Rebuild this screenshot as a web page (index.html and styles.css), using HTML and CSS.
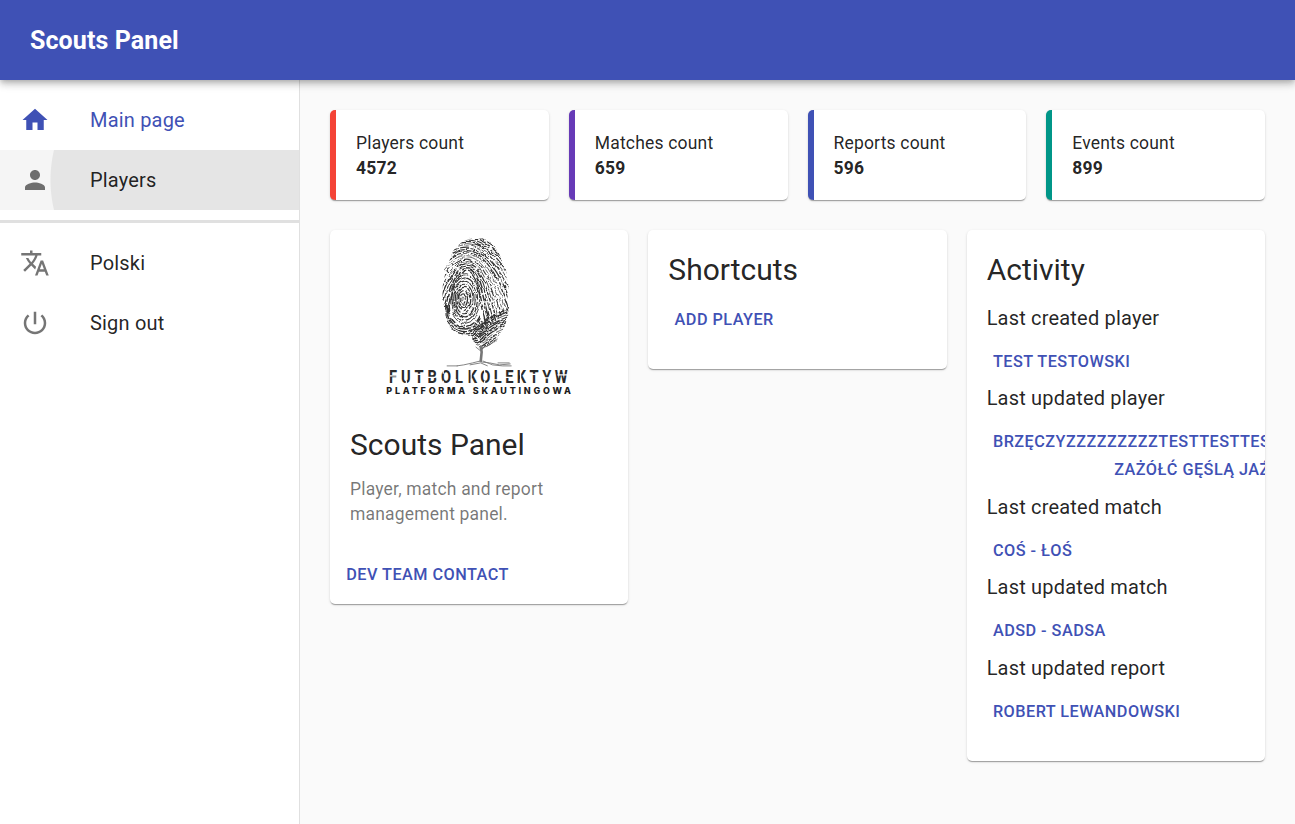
FILE: index.html
```html
<!DOCTYPE html>
<html lang="en">
<head>
<meta charset="utf-8">
<title>Scouts Panel</title>
<link rel="stylesheet" href="styles.css">
</head>
<body>
<header class="app-bar"><h1 class="app-title">Scouts Panel</h1></header>
<div class="shell">
  <nav class="drawer">
    <ul class="nav-list">
      <li class="nav-item active">
        <svg class="icon" viewBox="0 0 24 24"><path d="M10 20v-6h4v6h5v-8h3L12 3 2 12h3v8z"/></svg>
        <span>Main page</span>
      </li>
      <li class="nav-item pressed">
        <svg class="icon" viewBox="0 0 24 24"><path d="M12 12c2.21 0 4-1.79 4-4s-1.79-4-4-4-4 1.79-4 4 1.79 4 4 4zm0 2c-2.67 0-8 1.34-8 4v2h16v-2c0-2.66-5.33-4-8-4z"/></svg>
        <span>Players</span>
      </li>
    </ul>
    <div class="divider"></div>
    <ul class="nav-list">
      <li class="nav-item">
        <svg class="icon" viewBox="0 0 24 24"><path d="M12.87 15.07l-2.54-2.51.03-.03c1.74-1.94 2.98-4.17 3.71-6.53H17V4h-7V2H8v2H1v1.99h11.17C11.5 7.92 10.44 9.75 9 11.35 8.07 10.32 7.3 9.19 6.69 8h-2c.73 1.63 1.73 3.17 2.98 4.56l-5.09 5.02L4 19l5-5 3.11 3.11.76-2.04zM18.5 10h-2L12 22h2l1.12-3h4.75L21 22h2l-4.5-12zm-2.62 7l1.62-4.33L19.12 17h-3.24z"/></svg>
        <span>Polski</span>
      </li>
      <li class="nav-item">
        <svg class="icon" viewBox="0 0 24 24"><path d="M13 3h-2v10h2V3zm4.83 2.17l-1.42 1.42C17.99 7.86 19 9.81 19 12c0 3.87-3.13 7-7 7s-7-3.13-7-7c0-2.19 1.01-4.14 2.58-5.42L6.17 5.17C4.23 6.82 3 9.26 3 12c0 4.97 4.03 9 9 9s9-4.03 9-9c0-2.74-1.23-5.18-3.17-6.83z"/></svg>
        <span>Sign out</span>
      </li>
    </ul>
  </nav>
  <main class="content">
    <section class="stats">
      <div class="card stat red"><p>Players count</p><strong>4572</strong></div>
      <div class="card stat purple"><p>Matches count</p><strong>659</strong></div>
      <div class="card stat indigo"><p>Reports count</p><strong>596</strong></div>
      <div class="card stat teal"><p>Events count</p><strong>899</strong></div>
    </section>
    <section class="columns">
      <article class="card">
        <svg class="media" viewBox="0 0 299 175">
          <defs>
            <clipPath id="print">
              <path d="M144 8C158 7 168 17 172 30C177 42 179 55 179 68C181 82 177 96 170 105C165 113 157 117 151 120L147 115L142 106C132 106 125 104 121 97C114 84 112 70 113 56C114 36 122 10 144 8Z"/>
            </clipPath>
            <filter id="rough" x="-5%" y="-5%" width="110%" height="110%">
              <feTurbulence type="fractalNoise" baseFrequency="0.12" numOctaves="2" seed="4" result="n"/>
              <feDisplacementMap in="SourceGraphic" in2="n" scale="5" xChannelSelector="R" yChannelSelector="G"/>
              <feGaussianBlur stdDeviation="0.4"/>
            </filter>
          </defs>
          <g filter="url(#rough)"><g id="ridges" class="ridges" clip-path="url(#print)"></g></g>
          <g class="twigs">
            <path class="trunk" d="M151 116L152 122L151 132"/>
            <path d="M151 119L160 115L168 109M151 121L146 117M151 131L143 133L134 135L127 136M117 136H128M151 132L160 133L170 135L181 134M153 131L163 135L173 136L182 136M140 135L151 133L158 136M168 133H180"/>
          </g>
          <g transform="scale(.84 1)">
            <text class="logo-name" x="70.500" y="153.500" textLength="88" lengthAdjust="spacing">FUTBOL</text>
            <text class="logo-name" x="164.500" y="153.500" textLength="119" lengthAdjust="spacing">KOLEKTYW</text>
          </g>
          <path class="stencil" d="M60 146H69M76.500 140V144M76.500 151V155M84.500 144.500H94M96 147.500H106M113.500 140V144M113.500 151V155M122 150H127M141.500 140V155M155 140V144M155 151V155M164 150H169M175 147.500H184M191 140V155M201 144.500H210M213 148H223M228 145H238"/>
          <text class="logo-sub" x="56.500" y="164.500" textLength="185" lengthAdjust="spacing">PLATFORMA SKAUTINGOWA</text>
        </svg>
        <div class="card-content intro">
          <h2>Scouts Panel</h2>
          <p class="muted">Player, match and report management panel.</p>
        </div>
        <div class="card-actions"><button>Dev team contact</button></div>
      </article>
      <article class="card card-content">
        <h2>Shortcuts</h2>
        <button>Add player</button>
      </article>
      <article class="card card-content">
        <h2>Activity</h2>
        <h3>Last created player</h3><button>Test Testowski</button>
        <h3>Last updated player</h3><button>Brzęczyzzzzzzzzztesttesttesttesttesttest<br>Zażółć gęślą jaźń</button>
        <h3>Last created match</h3><button>Coś - Łoś</button>
        <h3>Last updated match</h3><button>adsd - sadsa</button>
        <h3>Last updated report</h3><button>Robert Lewandowski</button>
      </article>
    </section>
  </main>
</div>
<script src="ridges.js"></script>
</body>
</html>
```
FILE: styles.css
```css
* { box-sizing: border-box; }
body { margin: 0; font-family: Roboto, "Liberation Sans", sans-serif; color: rgba(0,0,0,.87); background: #fafafa; height: 824px; display: flex; flex-direction: column; overflow: hidden; }
h1, h2, h3, p, ul { margin: 0; padding: 0; font-weight: 400; }
.app-bar { height: 80px; flex: none; display: flex; align-items: center; padding: 2px 30px 0; background: #3f51b5; color: #fff; position: relative; z-index: 1; box-shadow: 0 2.5px 5px -1.25px rgba(0,0,0,.2), 0 5px 6.25px rgba(0,0,0,.14), 0 1.25px 12.5px rgba(0,0,0,.12); }
.app-title { font-size: 25px; line-height: 40px; font-weight: 700; letter-spacing: .004em; }
.shell { flex: 1; display: flex; min-height: 0; }
.drawer { width: 300px; flex: none; background: #fff; border-right: 1px solid #e0e0e0; }
.nav-list { list-style: none; padding: 10px 0; }
.nav-item { height: 60px; display: flex; align-items: center; gap: 40px; padding: 0 20px; font-size: 20px; letter-spacing: .00938em; }
.icon { width: 30px; height: 30px; fill: #757575; }
.active { color: #3f51b5; }
.active .icon { fill: #3f51b5; }
.pressed { background: radial-gradient(circle at 181px 30px, #e5e5e5 130px, #f5f5f5 131px); }
.pressed .icon { fill: #6e6e6e; }
.divider { height: 3px; background: #e0e0e0; }
.content { flex: 1; min-width: 0; padding: 30px; display: flex; flex-direction: column; gap: 30px; }
.stats { display: grid; grid-template-columns: repeat(4, minmax(0, 1fr)); gap: 20px; }
.columns { display: grid; grid-template-columns: repeat(3, minmax(0, 1fr)); gap: 20px; align-items: start; }
.card { background: #fff; border-radius: 5px; overflow: hidden; box-shadow: 0 2px 1px -1px rgba(0,0,0,.2), 0 1px 1px rgba(0,0,0,.14), 0 1px 3px rgba(0,0,0,.12); }
.stat { height: 90px; padding: 21px 20px 19px; border-left: 6px solid; font-size: 17.5px; line-height: 25px; letter-spacing: .01071em; }
.stat p, .stat strong { color: rgba(0,0,0,.87); display: block; }
.stat strong { font-weight: 700; }
.red { border-color: #f44336; }
.purple { border-color: #673ab7; }
.indigo { border-color: #3f51b5; }
.teal { border-color: #009688; }
.card-content { padding: 20px 20px 30px; }
.card-content.intro { padding-bottom: 19px; }
h2 { font-size: 30px; line-height: 1.334; margin-bottom: 10.5px; }
h3 { font-size: 20px; line-height: 35px; letter-spacing: .00938em; margin-bottom: 7px; }
.muted { padding-top: 1px; font-size: 17.5px; line-height: 25px; letter-spacing: .01071em; color: rgba(0,0,0,.54); }
.card-actions { padding: 10px; }
button { display: block; border: 0; background: none; color: #3f51b5; font: 500 16.25px/1.75 Roboto, sans-serif; letter-spacing: .02857em; text-transform: uppercase; padding: 5px 6.25px; white-space: nowrap; }
.media { display: block; width: 100%; height: 175px; }
.ridges { fill: none; stroke: #333; }
.twigs { fill: none; stroke: #777; stroke-width: .9; }
.trunk { stroke-width: 2.6; }
.logo-name { font: 700 17.5px/1 Roboto, sans-serif; fill: #2a2a2a; }
.logo-sub { font: 800 9px/1 Inter, sans-serif; fill: #1c1c1c; }
.stencil { fill: none; stroke: #fff; stroke-width: 1.2; }
```
FILE: ridges.js
```js
// Draws the fingerprint ridges: a whorl, arches around it and a fan below.
const group = document.getElementById('ridges');
let seed = 7;
const rnd = () => (seed = (seed * 16807) % 2147483647) / 2147483647;
function ridge(d) {
  const p = document.createElementNS('http://www.w3.org/2000/svg', 'path');
  p.setAttribute('d', d);
  p.setAttribute('stroke-width', (0.7 + rnd() * 0.9).toFixed(2));
  const dash = [];
  for (let i = 0; i < 4; i++) dash.push((4 + rnd() * 14).toFixed(1), (0.7 + rnd() * 1.5).toFixed(1));
  p.setAttribute('stroke-dasharray', dash.join(' '));
  group.appendChild(p);
}
for (let r = 2; r < 27; r += 3.2) {
  const rx = r * 0.6, cx = 133 + r * 0.1, cy = 69;
  ridge(`M${cx - rx} ${cy}A${rx} ${r} 0 1 1 ${cx + rx} ${cy}A${rx} ${r} 0 1 1 ${cx - rx} ${cy}`);
}
for (let r = 28; r < 44; r += 2.6) {
  const rx = 16 + (r - 27) * 0.7;
  ridge(`M${135 - rx} 76A${rx} ${r - 7} 0 0 0 ${138 + rx * 0.7} ${66 + r * 0.7}`);
}
for (let k = 0; k < 20; k++) {
  const top = 41 - k * 2.4, left = 115 - k * 2.6, right = 153 + k * 2.7;
  ridge(`M${left} ${104 - k * 4}C${left + 2} ${72 - k * 3} ${126 - k} ${top} 137 ${top}S${right - 4} ${62 - k * 1.5} ${right + 5} ${98 - k * 2.4}`);
}
for (let k = 0; k < 13; k++) {
  const y = 99 + k * 2.6;
  ridge(`M${143} ${y}Q151 ${y - 2} 158 ${y - 9}T190 ${y - 24}`);
}
```
